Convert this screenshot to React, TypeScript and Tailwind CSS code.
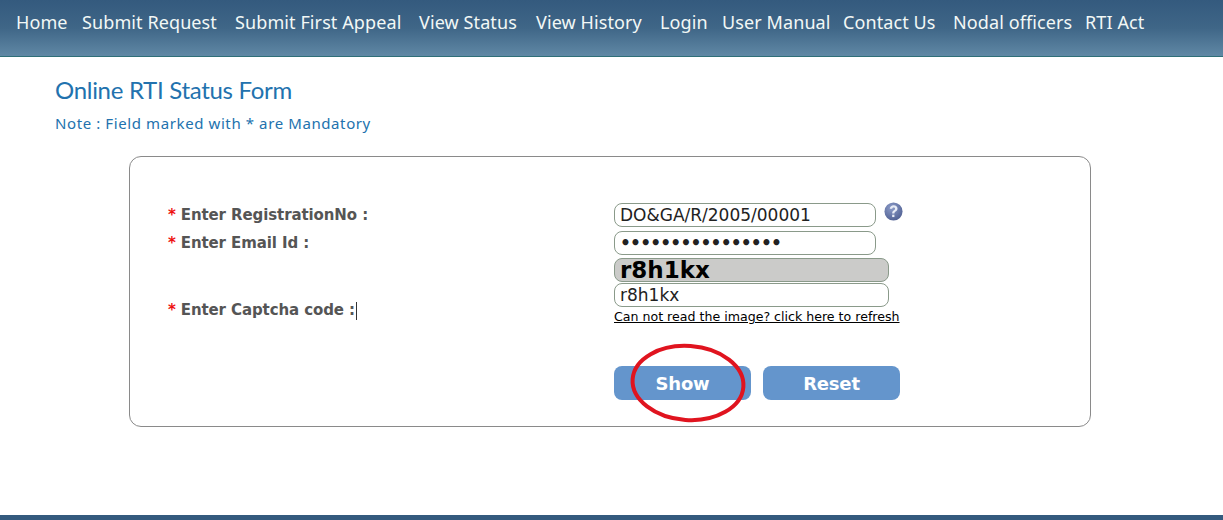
const navItems = [
  { label: "Home", width: "w-[66px]" },
  { label: "Submit Request", width: "w-[153px]" },
  { label: "Submit First Appeal", width: "w-[184px]" },
  { label: "View Status", width: "w-[117px]" },
  { label: "View History", width: "w-[124px]" },
  { label: "Login", width: "w-[62px]" },
  { label: "User Manual", width: "w-[121px]" },
  { label: "Contact Us", width: "w-[110px]" },
  { label: "Nodal officers", width: "w-[132px]" },
  { label: "RTI Act", width: "w-[70px]" },
];

const Label = ({ text, caret }: { text: string; caret?: boolean }) => (
  <p className="font-['DejaVu_Sans',sans-serif] text-[15px] font-bold leading-[20px] tracking-[-0.1px] text-[#555555]">
    <span className="text-[#e11] mr-[5px]">*</span>
    {text}
    {caret && <span className="inline-block w-px h-[18px] bg-[#333] align-middle ml-px" />}
  </p>
);

const Field = ({ value, dots }: { value: string; dots?: boolean }) => (
  <div className={`h-[24px] w-full rounded-[8px] border border-[#8a9a8a] bg-white pl-[5px] text-[17px] leading-[23px] text-[#222] font-['DejaVu_Sans',sans-serif] overflow-hidden whitespace-nowrap ${dots ? "font-bold tracking-[-0.8px]" : ""}`}>
    {value}
  </div>
);

const App = () => {
  return (
    <div className="relative h-[520px] w-[1223px] overflow-hidden bg-white flex flex-col font-['DejaVu_Sans',sans-serif]">
      <header className="h-[57px] shrink-0 border-b border-[#2f6f78] bg-gradient-to-b from-[#345a7e] via-[#3f6687] to-[#6088a5] pl-[16px] pt-[12px]">
        <nav className="flex">
          {navItems.map((item) => (
            <span
              key={item.label}
              className={`${item.width} shrink-0 whitespace-nowrap text-[18px] leading-[20px] tracking-[0.1px] text-[#f2f8f6] font-['Noto_Sans',sans-serif]`}
            >
              {item.label}
            </span>
          ))}
        </nav>
      </header>

      <main className="flex-1 pl-[55px] pt-[18px]">
        <h1 className="font-['Lato',sans-serif] text-[24px] leading-[30px] tracking-[-0.3px] text-[#2272ae]">Online RTI Status Form</h1>
        <p className="mt-[9px] text-[15px] leading-[18px] text-[#2272ae] font-['Noto_Sans',sans-serif] tracking-[0.6px]">
          Note : Field marked with * are Mandatory
        </p>

        <section className="ml-[74px] mt-[24px] h-[271px] w-[962px] rounded-[12px] border border-[#8a8a8a] pl-[38px] pt-[46px] flex">
          <div className="w-[446px] pt-[2px]">
            <div className="h-[28px]">
              <Label text="Enter RegistrationNo :" />
            </div>
            <div className="h-[67px]">
              <Label text="Enter Email Id :" />
            </div>
            <Label text="Enter Captcha code :" caret />
          </div>

          <div className="w-[275px]">
            <div className="flex items-start">
              <div className="w-[262px] shrink-0">
                <Field value="DO&GA/R/2005/00001" />
              </div>
              <svg className="ml-[8px] -mt-[1px] shrink-0" width="19" height="19" viewBox="0 0 20 20">
                <defs>
                  <radialGradient id="help" cx="40%" cy="30%" r="75%">
                    <stop offset="0%" stopColor="#8c9cc8" />
                    <stop offset="100%" stopColor="#4f5f92" />
                  </radialGradient>
                </defs>
                <circle cx="10" cy="10" r="9.5" fill="url(#help)" />
                <g transform="translate(-2.4 -2.4) scale(1.25)">
                  <path d="M6.8 7.6c.2-1.9 1.5-2.9 3.3-2.9 1.9 0 3.2 1.1 3.2 2.7 0 1.2-.6 1.9-1.6 2.5-.8.5-1 .9-1 1.7H8.8c0-1.4.4-2.1 1.4-2.8.7-.5 1-.8 1-1.3 0-.6-.5-1-1.1-1-.7 0-1.2.4-1.3 1.2z" fill="#e8ecf6" />
                  <rect x="8.8" y="12.6" width="1.9" height="2" fill="#e8ecf6" />
                </g>
              </svg>
            </div>
            <div className="mt-[4px] w-[262px]">
              <Field value="••••••••••••••••" dots />
            </div>
            <div className="mt-[3px] h-[24px] rounded-[8px] border border-[#8a9a8a] bg-[#cbcbc9] pl-[5px] font-['DejaVu_Sans',sans-serif] text-[23px] font-bold leading-[23px] text-black">
              r8h1kx
            </div>
            <div className="mt-px">
              <Field value="r8h1kx" />
            </div>
            <a className="mt-[2px] block whitespace-nowrap font-['DejaVu_Sans',sans-serif] text-[12.6px] leading-[16px] text-black underline">
              Can not read the image? click here to refresh
            </a>

            <div className="mt-[41px] flex gap-[12px]">
              <button className="h-[34px] w-[137px] shrink-0 rounded-[8px] bg-[#6495cc] text-[18px] font-bold tracking-[-0.2px] text-white">Show</button>
              <button className="h-[34px] w-[137px] shrink-0 rounded-[8px] bg-[#6495cc] text-[18px] font-bold tracking-[-0.2px] text-white">Reset</button>
            </div>
          </div>
        </section>
      </main>

      <footer className="h-[5px] shrink-0 bg-[#345a7e]" />

      <svg className="absolute left-[626px] top-[340px]" width="126" height="88" viewBox="0 0 126 88">
        <ellipse cx="62" cy="43" rx="55.5" ry="37" fill="none" stroke="#e0141f" strokeWidth="4" transform="rotate(4 62 43)" />
      </svg>
    </div>
  );
};

export default App;
